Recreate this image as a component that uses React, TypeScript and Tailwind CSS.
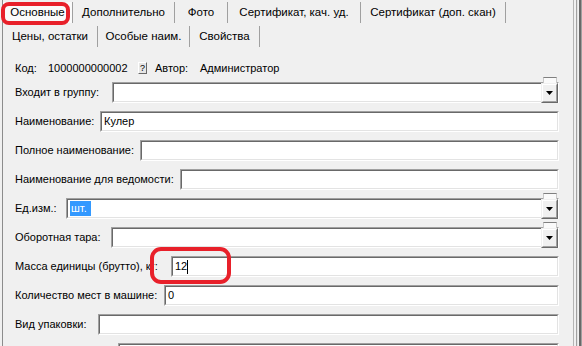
import React from "react";

const font = { fontFamily: "Tahoma, 'Liberation Sans', Arial, sans-serif" };

function Sunken({ children, combo }: { children?: React.ReactNode; combo?: boolean }) {
    return (
        <div className="relative flex-1 h-[21px] border border-t-[#a0a0a0] border-l-[#a0a0a0] border-b-white border-r-white">
            <div className="h-full border border-t-[#696969] border-l-[#696969] border-b-[#e3e3e3] border-r-[#e3e3e3] bg-white flex items-center pl-[2px] text-[11px] text-black">
                {children}
            </div>
            {combo && (
                <>
                    <div className="absolute -top-[6px] right-[1px] w-[14px] h-[6px] border-t border-x border-t-[#808080] border-x-[#c8c8c8] bg-[#fafafa]" />
                    <div className="absolute top-0 right-0 w-[17px] h-[20px] bg-[#f0f0f0] border border-t-[#f0f0f0] border-l-[#f0f0f0] border-b-[#696969] border-r-[#696969]">
                        <div className="h-full border border-t-white border-l-white border-b-[#a0a0a0] border-r-[#a0a0a0] flex items-center justify-center">
                            <svg width="7" height="4" viewBox="0 0 7 4">
                                <path d="M0 0h7L3.5 4z" fill="#000" />
                            </svg>
                        </div>
                    </div>
                </>
            )}
        </div>
    );
}

function Row({ label, w, children, combo }: { label: string; w: number; children?: React.ReactNode; combo?: boolean }) {
    return (
        <div className="flex items-center h-[21px]">
            <div className="shrink-0 whitespace-nowrap text-[11px] text-black" style={{ width: w }}>{label}</div>
            <Sunken combo={combo}>{children}</Sunken>
        </div>
    );
}

export default function App() {
    const row1 = [
        { t: "Основные", w: 70, sel: true },
        { t: "Дополнительно", w: 102 },
        { t: "Фото", w: 53 },
        { t: "Сертификат, кач. уд.", w: 133 },
        { t: "Сертификат (доп. скан)", w: 145 },
    ];
    const row2 = [
        { t: "Цены, остатки", w: 95 },
        { t: "Особые наим.", w: 92 },
        { t: "Свойства", w: 70 },
    ];

    return (
        <div className="relative w-[582px] h-[346px] overflow-hidden bg-[#f0f0f0] flex" style={font}>
            <div className="w-[2px] bg-[#f0f0f0]" />
            <div className="w-px bg-[#8c8c8c]" />
            <div className="flex-1 flex flex-col">
                {/* tabs */}
                <div className="pt-[2px] flex flex-col gap-[3px]">
                    <div className="flex h-[21px]">
                        {row1.map((tab) => (
                            <div
                                key={tab.t}
                                className={"flex items-center justify-center border-r border-[#a0a0a0] text-[11.5px] text-black whitespace-nowrap " + (tab.sel ? "bg-[#fafafa]" : "")}
                                style={{ width: tab.w }}
                            >
                                {tab.t}
                            </div>
                        ))}
                    </div>
                    <div className="flex h-[21px]">
                        {row2.map((tab) => (
                            <div
                                key={tab.t}
                                className="flex items-center justify-center border-r border-[#a0a0a0] text-[11.5px] text-black whitespace-nowrap"
                                style={{ width: tab.w }}
                            >
                                {tab.t}
                            </div>
                        ))}
                    </div>
                </div>

                {/* form */}
                <div className="pl-[12px] pr-[14px] flex flex-col">
                    <div className="mt-[14px] h-[14px] flex items-center text-[11px] text-black whitespace-nowrap">
                        <span className="w-[33px]">Код:</span>
                        <span className="w-[90px]">1000000000002</span>
                        <span className="w-[9px] h-[12px] flex items-center justify-center text-[9px] leading-none bg-[#e6e6e6] border border-t-white border-l-white border-b-[#696969] border-r-[#696969]">?</span>
                        <span className="ml-[8px] w-[45px]">Автор:</span>
                        <span>Администратор</span>
                    </div>
                    <div className="mt-[7px] flex flex-col gap-[8px]">
                        <Row label="Входит в группу:" w={97} combo />
                        <Row label="Наименование:" w={85}>Кулер</Row>
                        <Row label="Полное наименование:" w={125} />
                        <Row label="Наименование для ведомости:" w={165} />
                        <Row label="Ед.изм.:" w={51} combo>
                            <span className="bg-[#3399ff] text-white pl-[1px] pr-[4px] leading-[15px]">шт.</span>
                        </Row>
                        <Row label="Оборотная тара:" w={96} combo />
                        <Row label="Масса единицы (брутто), кг:" w={156}>
                            <span>12</span>
                            <span className="w-px h-[14px] bg-black" />
                        </Row>
                        <Row label="Количество мест в машине:" w={149}>0</Row>
                        <Row label="Вид упаковки:" w={83} />
                        <Row label="" w={103} />
                    </div>
                </div>
            </div>

            {/* right frame edge */}
            <div className="flex h-full">
                <div className="w-px bg-[#b4b4b4]" />
                <div className="w-[2px] bg-[#f0f0f0]" />
                <div className="w-px bg-[#a0a0a0]" />
                <div className="w-px bg-[#e3e3e3]" />
                <div className="w-px bg-[#f0f0f0]" />
                <div className="w-[2px] bg-[#696969]" />
                <div className="w-px bg-[#a0a0a0]" />
            </div>

            {/* red annotations */}
            <div className="absolute left-[1px] top-[2px] w-[69px] h-[23px] border-[4px] border-[#e8202a] rounded-[8px]" />
            <div className="absolute left-[150px] top-[247px] w-[81px] h-[37px] border-[4px] border-[#e8202a] rounded-[11px]" />
        </div>
    );
}
